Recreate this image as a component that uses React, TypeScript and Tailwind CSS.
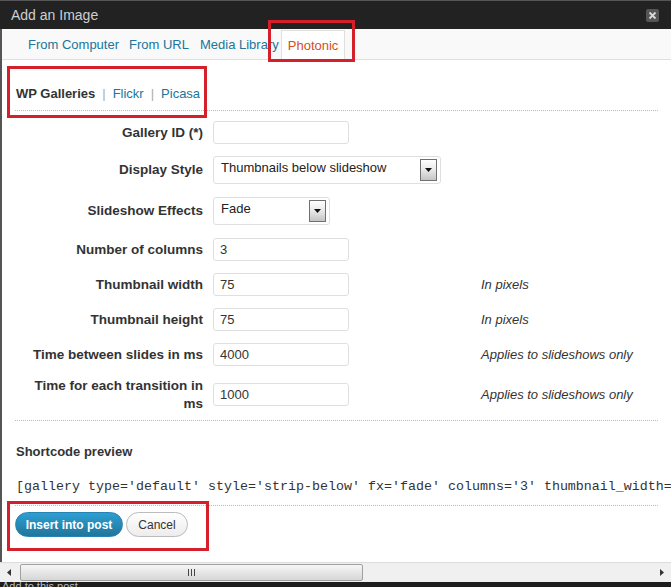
import React from "react";

const F = { fontFamily: '"Liberation Sans", Arial, sans-serif' };

function TextInput({ value }: { value: string }) {
  return (
    <div className="w-[136px] h-[23px] border border-[#dfdfdf] rounded-[3px] bg-white pl-[6px] flex items-center text-[13px] text-[#333] leading-none">
      {value}
    </div>
  );
}

function Select({ value, w }: { value: string; w: string }) {
  return (
    <div className={`${w} h-[28px] border border-[#dfdfdf] rounded-[3px] bg-white flex items-start justify-between pl-[7px] pr-[3px]`}>
      <span className="text-[13px] text-[#222] leading-[17px] pt-[2px]">{value}</span>
      <div className="mt-[2px] w-[17px] h-[22px] border border-[#707070] bg-gradient-to-b from-[#ffffff] via-[#e8e8e8] to-[#c4c4c4] flex justify-center pt-[8px]">
        <svg width="7" height="4" viewBox="0 0 7 4">
          <path d="M0 0 L7 0 L3.5 4 Z" fill="#111" />
        </svg>
      </div>
    </div>
  );
}

function Row({
  label,
  h,
  hint,
  children,
}: {
  label: React.ReactNode;
  h: string;
  hint?: string;
  children: React.ReactNode;
}) {
  return (
    <div className={`grid grid-cols-[188px_268px_1fr] items-center ${h}`}>
      <div className="text-right text-[13.5px] font-bold text-[#333] leading-[18px]">{label}</div>
      <div className="pl-[10px]">{children}</div>
      <div className="pl-[10px] text-[13px] italic text-[#333] leading-[17px]">{hint}</div>
    </div>
  );
}

export default function App() {
  return (
    <div className="relative w-[671px] h-[587px] overflow-hidden flex flex-col bg-white" style={F}>
      {/* Title bar */}
      <div className="h-[29px] shrink-0 bg-[#222] border-t border-[#555] flex items-center justify-between pl-[11px] pr-[12px]">
        <span className="text-[14px] text-[#cfcfcf] leading-none">Add an Image</span>
        <div className="w-[13px] h-[13px] rounded-[2px] bg-[#555] flex items-center justify-center">
          <svg width="9" height="9" viewBox="0 0 9 9">
            <path d="M1.5 1.5 L7.5 7.5 M7.5 1.5 L1.5 7.5" stroke="#d8d8d8" strokeWidth="1.8" />
          </svg>
        </div>
      </div>

      <div className="flex-1 flex flex-col border-l-2 border-[#555] min-h-0">
        {/* Tab bar */}
        <div className="h-[31px] shrink-0 bg-[#f9f9f9] border-b border-[#dfdfdf] flex items-end pl-[26px]">
          <span className="text-[13px] text-[#21759b] leading-[29px]">From Computer</span>
          <span className="ml-[10px] text-[13px] text-[#21759b] leading-[29px]">From URL</span>
          <span className="ml-[11px] text-[13px] text-[#21759b] leading-[29px]">Media Library</span>
          <span className="ml-[2px] -mb-px h-[30px] px-[6px] bg-white border border-b-0 border-[#dfdfdf] text-[13px] text-[#d54e21] leading-[29px]">
            Photonic
          </span>
        </div>

        {/* Body */}
        <div className="flex-1 flex flex-col min-h-0">
          <div className="mx-[13px] pt-[25px] pb-[8px] border-b border-dotted border-[#bbb] text-[13px] leading-[17px] flex items-center">
            <span className="ml-[1px] font-bold text-[#333]">WP Galleries</span>
            <span className="mx-[7px] text-[#aaa]">|</span>
            <span className="text-[#21759b]">Flickr</span>
            <span className="mx-[7px] text-[#aaa]">|</span>
            <span className="text-[#21759b]">Picasa</span>
          </div>

          <div className="mx-[13px] pt-[4px] pb-[3px] border-b border-dotted border-[#bbb]">
            <Row label="Gallery ID (*)" h="h-[35px]">
              <TextInput value="" />
            </Row>
            <Row label="Display Style" h="h-[40px]">
              <Select value="Thumbnails below slideshow" w="w-[228px]" />
            </Row>
            <Row label="Slideshow Effects" h="h-[42px]">
              <Select value="Fade" w="w-[117px]" />
            </Row>
            <Row label="Number of columns" h="h-[35px]">
              <TextInput value="3" />
            </Row>
            <Row label="Thumbnail width" h="h-[35px]" hint="In pixels">
              <TextInput value="75" />
            </Row>
            <Row label="Thumbnail height" h="h-[35px]" hint="In pixels">
              <TextInput value="75" />
            </Row>
            <Row label="Time between slides in ms" h="h-[35px]" hint="Applies to slideshows only">
              <TextInput value="4000" />
            </Row>
            <Row
              label={
                <>
                  Time for each transition in
                  <br />
                  ms
                </>
              }
              h="h-[45px]"
              hint="Applies to slideshows only"
            >
              <TextInput value="1000" />
            </Row>
          </div>

          <div className="mx-[13px] pt-[22px] text-[13px] font-bold text-[#333] leading-[17px] pl-[1px]">
            Shortcode preview
          </div>
          <div className="ml-[13px] mr-[13px] pt-[18px] pb-[10px] border-b border-dotted border-[#bbb]">
            <div
              className="pl-[1px] text-[13.33px] text-[#333] leading-[17px] whitespace-nowrap"
              style={{ fontFamily: '"Liberation Mono", "Courier New", monospace' }}
            >
              [gallery type='default' style='strip-below' fx='fade' columns='3' thumbnail_width='75' thumbnail_height='75']
            </div>
          </div>

          <div className="mx-[13px] pt-[6px] flex items-center gap-[3px]">
            <div className="h-[25px] w-[108px] rounded-full border border-[#2584b2] bg-gradient-to-b from-[#2e9fd2] to-[#21759b] flex items-center justify-center text-[12px] font-bold text-white">
              Insert into post
            </div>
            <div className="h-[25px] w-[62px] rounded-full border border-[#bbb] bg-gradient-to-b from-[#ffffff] to-[#ececec] flex items-center justify-center text-[12px] text-[#333]">
              Cancel
            </div>
          </div>
        </div>
      </div>

      {/* Scrollbar */}
      <div className="h-[20px] shrink-0 bg-[#f0f0f0] border-t border-[#dcdcdc] flex items-center">
        <div className="w-[18px] flex justify-center">
          <svg width="4" height="7" viewBox="0 0 4 7">
            <path d="M4 0 L0 3.5 L4 7 Z" fill="#333" />
          </svg>
        </div>
        <div className="ml-[2px] w-[343px] h-[17px] rounded-[2px] border border-[#a0a0a0] bg-gradient-to-b from-[#f6f6f6] to-[#d6d6d6] flex items-center justify-center">
          <svg width="7" height="7" viewBox="0 0 7 7">
            <path d="M0.5 0 V7 M3.5 0 V7 M6.5 0 V7" stroke="#444" strokeWidth="1" />
          </svg>
        </div>
        <div className="flex-1" />
        <div className="w-[18px] flex justify-center">
          <svg width="4" height="7" viewBox="0 0 4 7">
            <path d="M0 0 L4 3.5 L0 7 Z" fill="#333" />
          </svg>
        </div>
      </div>
      <div className="h-[5px] shrink-0 bg-[#1e1e1e] overflow-hidden">
        <div className="pl-[2px] text-[11px] text-[#bbb] leading-[11px] -mt-[1px]">Add to this post</div>
      </div>

      {/* Red annotation boxes */}
      <div className="absolute left-[268px] top-[20px] w-[87px] h-[42px] border-[3px] border-[#d4202a]" />
      <div className="absolute left-[7px] top-[66px] w-[200px] h-[52px] border-[3px] border-[#d4202a]" />
      <div className="absolute left-[7px] top-[501px] w-[202px] h-[50px] border-[3px] border-[#d4202a]" />
    </div>
  );
}
